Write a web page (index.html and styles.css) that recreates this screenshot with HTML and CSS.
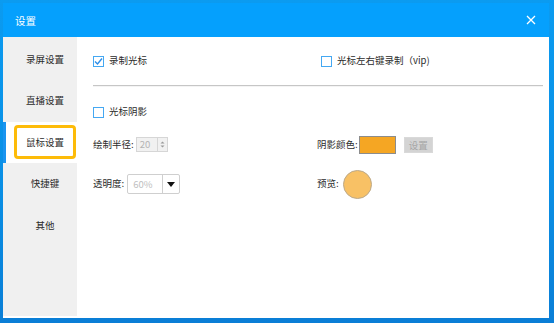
FILE: index.html
```html
<!DOCTYPE html>
<html lang="zh-CN">
<head>
<meta charset="UTF-8">
<title>设置</title>
<link rel="stylesheet" href="styles.css">
</head>
<body>

<div class="window">
    <!-- title bar -->
    <div class="titlebar">
        <span class="title">设置</span>
        <svg class="close" width="10" height="10" viewBox="0 0 10 10">
            <path d="M1 1 L9 9 M9 1 L1 9" stroke="#fff" stroke-width="1.3" fill="none"/>
        </svg>
    </div>

    <div class="body">
        <!-- left menu -->
        <div class="menu">
            <div class="item"><span class="label">录屏设置</span></div>
            <div class="item"><span class="label">直播设置</span></div>
            <div class="item active"><span class="label">鼠标设置</span></div>
            <div class="item"><span class="label">快捷键</span></div>
            <div class="item"><span class="label">其他</span></div>
        </div>

        <!-- mouse settings page -->
        <div class="page">
            <div class="row row1">
                <div class="col-left">
                    <span class="check checked">
                        <svg width="9" height="9" viewBox="0 0 9 9"><path d="M1 4.5 L3.5 7 L8 1.5" stroke="#2d8ee8" stroke-width="1.4" fill="none"/></svg>
                    </span>
                    <span class="txt">录制光标</span>
                </div>
                <div class="col-right shift">
                    <span class="check"></span>
                    <span class="txt">光标左右键录制（vip)</span>
                </div>
            </div>

            <div class="divider"></div>

            <div class="row row2">
                <div class="col-left">
                    <span class="check"></span>
                    <span class="txt">光标阴影</span>
                </div>
            </div>

            <div class="row row3">
                <div class="col-left">
                    <span class="txt">绘制半径:</span>
                    <span class="spin">
                        <span class="spin-val">20</span>
                        <span class="spin-btns">
                            <svg width="5" height="9" viewBox="0 0 5 9"><path d="M0.5 3.5 L2.5 1.5 L4.5 3.5 Z M0.5 5.5 L2.5 7.5 L4.5 5.5 Z" fill="#9a9a9a"/></svg>
                        </span>
                    </span>
                </div>
                <div class="col-right">
                    <span class="txt">阴影颜色:</span>
                    <span class="swatch"></span>
                    <span class="btn">设置</span>
                </div>
            </div>

            <div class="row row4">
                <div class="col-left">
                    <span class="txt">透明度:</span>
                    <span class="combo">
                        <span class="combo-val">60%</span>
                        <span class="combo-arrow">
                            <svg width="8" height="5" viewBox="0 0 8 5"><path d="M0 0 L8 0 L4 5 Z" fill="#111"/></svg>
                        </span>
                    </span>
                </div>
                <div class="col-right">
                    <span class="txt">预览:</span>
                    <span class="preview"></span>
                </div>
            </div>
        </div>
    </div>
</div>

</body>
</html>
```

FILE: styles.css
```css
html, body {
    margin: 0;
    height: 100%;
}

body {
    background: linear-gradient(180deg, #0b9bf0 0%, #0a8ee4 60%, #0a7ed6 100%);
    padding: 3px 5px 5px 3px;
    box-sizing: border-box;
    font-family: "Noto Sans CJK SC", "DejaVu Sans", sans-serif;
    font-size: 9.5px;
    color: #333;
}

.window {
    width: 546px;
    height: 315px;
    background: #fff;
    display: flex;
    flex-direction: column;
}

/* title bar */
.titlebar {
    height: 34px;
    background: #05a0fd;
    display: flex;
    align-items: center;
    justify-content: space-between;
    padding: 0 13px 0 12px;
    flex-shrink: 0;
}

.titlebar .title {
    color: #fff;
    font-size: 10.5px;
}

.titlebar .close {
    display: block;
}

.body {
    flex: 1;
    display: flex;
}

/* left menu */
.menu {
    width: 74px;
    background: #f0f0f0;
    padding-top: 1.5px;
    margin-bottom: 2px;
}

.menu .item {
    height: 41.5px;
    display: flex;
    align-items: center;
    justify-content: center;
    padding-left: 10px;
    box-sizing: border-box;
}

.menu .label {
    color: #2b2b2b;
    line-height: 1;
}

.menu .item.active {
    background: #fff;
    border-left: 3px solid #1a94f0;
    padding-left: 7px;
}

.menu .item.active .label {
    width: 62px;
    height: 34px;
    box-sizing: border-box;
    border: 3px solid #fdbb08;
    border-radius: 4px;
    display: flex;
    align-items: center;
    justify-content: center;
}

/* page */
.page {
    flex: 1;
    padding: 18px 6px 0 16px;
}

.row {
    display: flex;
    align-items: center;
}

.col-left {
    width: 224px;
    display: flex;
    align-items: center;
}

.col-right {
    display: flex;
    align-items: center;
}

.col-right.shift {
    margin-left: 4px;
}

.row1 { height: 12px; }
.row2 { height: 12px; margin-top: 19px; }
.row3 { height: 19px; margin-top: 17px; }
.row4 { height: 30px; margin-top: 15px; }

.txt {
    line-height: 1;
    white-space: nowrap;
    color: #2b2b2b;
}

.check {
    width: 11px;
    height: 11px;
    box-sizing: border-box;
    border: 1px solid #45a8f2;
    background: #fff;
    margin-right: 5px;
    display: flex;
    align-items: center;
    justify-content: center;
}

.divider {
    height: 0;
    border-top: 1px solid #c6c6c6;
    border-bottom: 1px solid #f4f4f4;
    margin: 18px 0 0 0;
}

/* disabled spin box */
.spin {
    width: 32px;
    height: 15px;
    box-sizing: border-box;
    border: 1px solid #d6d6d6;
    background: #f1f1f1;
    margin-left: 2px;
    display: flex;
}

.spin-val {
    flex: 1;
    color: #b4b4b4;
    padding-left: 3px;
    line-height: 13px;
}

.spin-btns {
    width: 9px;
    border-left: 1px solid #d6d6d6;
    display: flex;
    align-items: center;
    justify-content: center;
}

/* combo */
.combo {
    width: 53px;
    height: 20px;
    box-sizing: border-box;
    border: 1px solid #cfcfcf;
    border-radius: 2px;
    background: #fff;
    margin-left: 3px;
    display: flex;
}

.combo-val {
    flex: 1;
    color: #c0c0c0;
    padding-left: 5px;
    line-height: 18px;
}

.combo-arrow {
    width: 16px;
    border-left: 1px solid #cfcfcf;
    display: flex;
    align-items: center;
    justify-content: center;
}

.swatch {
    width: 37px;
    height: 18px;
    box-sizing: border-box;
    background: #f5a623;
    border: 1px solid #8c8c8c;
    margin-left: 1px;
}

.btn {
    width: 29px;
    height: 16px;
    background: #d4d4d4;
    border: 1px solid #d9d9d9;
    box-sizing: border-box;
    color: #a6a6a6;
    margin-left: 8px;
    display: flex;
    align-items: center;
    justify-content: center;
}

.preview {
    width: 29px;
    height: 29px;
    box-sizing: border-box;
    border-radius: 50%;
    background: #f8c165;
    border: 1px solid #bba98b;
    margin-left: 4px;
}
```
